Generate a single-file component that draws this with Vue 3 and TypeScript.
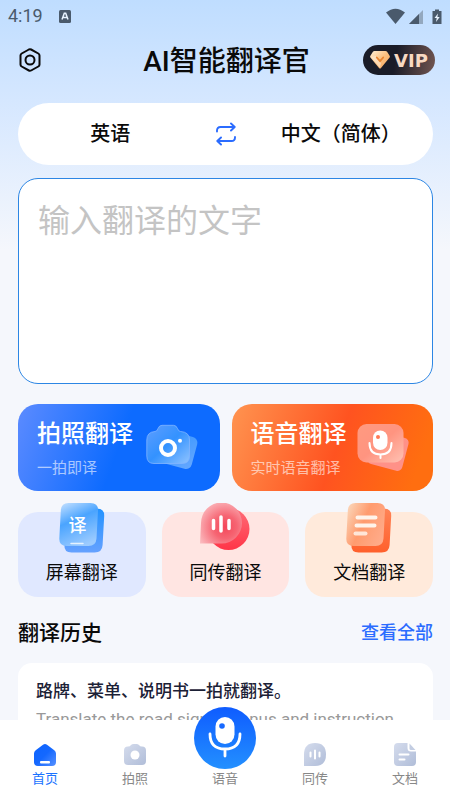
<script setup lang="ts">
import { ref } from 'vue'

type TabId = 'home' | 'photo' | 'voice' | 'live' | 'doc'

interface Tab {
  id: TabId
  label: string
}

const tabs: Tab[] = [
  { id: 'home', label: '首页' },
  { id: 'photo', label: '拍照' },
  { id: 'voice', label: '语音' },
  { id: 'live', label: '同传' },
  { id: 'doc', label: '文档' },
]

const active = ref<TabId>('home')
const source = ref<string>('英语')
const target = ref<string>('中文（简体）')
const draft = ref<string>('')

function swapLanguages(): void {
  const previous = source.value
  source.value = target.value
  target.value = previous
}
</script>

<template>
  <div class="app">
    <div class="status">
      <span class="clock">4:19</span>
      <svg class="status-app" width="12" height="13" viewBox="0 0 12 13">
        <rect width="12" height="13" rx="1.5" fill="#4a5a6c" />
        <path d="M3 9.5 5.3 3.2h1.4L9 9.5M4 7.4h4" fill="none" stroke="#e8f3ff" stroke-width="1.5" />
      </svg>
      <svg class="status-icons" width="56" height="17" viewBox="0 0 56 17">
        <path d="M0 4.6Q9.500-3.200 19 4.600L9.500 16z" fill="#4a5a6c" />
        <path d="M23 16 37 2v14z" fill="#93a8bf" />
        <path d="M23 16 33 6v10z" fill="#4a5a6c" />
        <path d="M49 1.500h4V3h2.500v13h-9V3H49z" fill="#4a5a6c" />
        <path d="M52 5.500 48.500 10h2.200l-.7 4 3.700-5h-2.300z" fill="#e8f3ff" />
      </svg>
    </div>

    <header class="header">
      <button class="icon-button" type="button" aria-label="设置">
        <svg width="24" height="24" viewBox="0 0 24 24" fill="none" stroke="#0a0a0a" stroke-width="2">
          <path d="M10.900 1.500q1.100-.6 2.200 0l7.200 4q1.200.7 1.200 2v9q0 1.300-1.200 2l-7.200 4q-1.100.6-2.200 0l-7.200-4q-1.200-.7-1.200-2v-9q0-1.300 1.200-2z" />
          <circle cx="12" cy="12" r="4.500" />
        </svg>
      </button>
      <h1 class="title">AI智能翻译官</h1>
      <button class="vip" type="button">
        <svg width="20" height="18" viewBox="0 0 20 18">
          <defs>
            <linearGradient id="gem" x1="0" y1="0" x2="1" y2="1">
              <stop offset="0" stop-color="#fff0d8" />
              <stop offset=".5" stop-color="#fbc07f" />
              <stop offset="1" stop-color="#f6a45c" />
            </linearGradient>
          </defs>
          <path d="M4.500 0h11q1 0 1.600.8l2.500 4q.7 1-.2 2L11 17q-1 1-2 0L.6 6.800q-.9-1-.2-2l2.500-4Q3.500 0 4.500 0z" fill="url(#gem)" />
          <path d="m1 6 9 11 1-5-5-7z" fill="#fff1de" opacity=".55" />
          <path d="m6.800 6.500 3.200 3.700 3.200-3.700" fill="none" stroke="#e98532" stroke-width="1.800" stroke-linecap="round" stroke-linejoin="round" />
        </svg>
        <span>VIP</span>
      </button>
    </header>

    <main class="content">
      <div class="languages">
        <button type="button" class="language">{{ source }}</button>
        <button type="button" class="swap" aria-label="交换语言" @click="swapLanguages">
          <svg width="20" height="24" viewBox="0 0 20 24" fill="none" stroke="#2b6cff" stroke-width="1.900" stroke-linecap="round" stroke-linejoin="round">
            <path d="M1 9.500V8.500q0-3.500 3.500-3.500H18.500M15 1.500 18.700 5 15 8.500" />
            <path d="M19 15v.500q0 3.500-3.500 3.500H1.500M5 15.500 1.300 19 5 22.500" />
          </svg>
        </button>
        <button type="button" class="language">{{ target }}</button>
      </div>

      <textarea v-model="draft" class="editor" aria-label="输入翻译的文字" placeholder="输入翻译的文字"></textarea>

      <section class="features">
        <button type="button" class="feature photo">
          <span class="feature-text">
            <strong>拍照翻译</strong>
            <small>一拍即译</small>
          </span>
          <svg width="53" height="48" viewBox="0 0 53 48">
            <defs>
              <linearGradient id="camBack" x1="0" y1="0" x2="1" y2="1">
                <stop offset="0" stop-color="#2f92ff" />
                <stop offset="1" stop-color="#66a8ff" />
              </linearGradient>
              <linearGradient id="camFront" x1="0" y1="0" x2="1" y2="1">
                <stop offset="0" stop-color="#5f9eff" />
                <stop offset=".5" stop-color="#3392ff" />
                <stop offset="1" stop-color="#8fc3ff" />
              </linearGradient>
            </defs>
            <rect x="12" y="9" width="37" height="33" rx="6" transform="rotate(15 30 26)" fill="url(#camBack)" />
            <path d="M9 7.500q2 0 3-3Q13.300 1.300 16 1.300h11.500q2.700 0 4 3.200 1 3 3 3 9 .5 9 8.500v16q0 7.500-7.500 7.500H8Q.8 39.500.8 32V16q0-8 8.200-8.500z" fill="url(#camFront)" stroke="#83b5ff" stroke-width=".8" />
            <circle cx="22" cy="24" r="7" fill="none" stroke="#fff" stroke-width="4" />
            <circle cx="34" cy="16.700" r="2" fill="#fff" />
          </svg>
        </button>
        <button type="button" class="feature speech">
          <span class="feature-text">
            <strong>语音翻译</strong>
            <small>实时语音翻译</small>
          </span>
          <svg width="55" height="50" viewBox="0 0 55 50">
            <defs>
              <linearGradient id="micFront" x1="0" y1="0" x2="1" y2="1">
                <stop offset="0" stop-color="#ff9a80" />
                <stop offset=".5" stop-color="#ff9480" />
                <stop offset="1" stop-color="#ffc2b4" />
              </linearGradient>
            </defs>
            <rect x="13" y="11" width="36" height="34" rx="5" transform="rotate(15 31 28)" fill="#ff9188" />
            <rect x=".5" y="1" width="46" height="38.500" rx="9" fill="url(#micFront)" />
            <rect x="16" y="7.500" width="14.500" height="19.500" rx="7.250" fill="#fff" />
            <circle cx="21" cy="14" r="2" fill="#ff7955" />
            <path d="M12.500 20q0 11.500 11 11.500T34.500 20M23.500 32v3" fill="none" stroke="#fff" stroke-width="2" stroke-linecap="round" />
          </svg>
        </button>
      </section>

      <section class="tools">
        <button type="button" class="tool screen">
          <svg width="46" height="50" viewBox="0 0 46 50">
            <defs>
              <linearGradient id="scrBack" x1="0" y1="0" x2="0" y2="1">
                <stop offset="0" stop-color="#2292ff" />
                <stop offset="1" stop-color="#65a1ff" />
              </linearGradient>
              <linearGradient id="scrFront" x1=".2" y1="0" x2=".6" y2="1">
                <stop offset="0" stop-color="#b5d9ff" />
                <stop offset=".4" stop-color="#4aa4ff" />
                <stop offset="1" stop-color="#9ccbff" />
              </linearGradient>
            </defs>
            <path d="M14 5.500H38Q45.600 5.500 45.200 13L43.600 42Q43.200 49.500 35.600 49.500H12.500Q5 49.500 5.400 42L6.800 13Q7.200 5.500 14 5.500z" fill="url(#scrBack)" />
            <path d="M9.500 0H31.500Q39.400 0 39 7.500L37.500 35.500Q37 43 29.500 43H7.500Q0 43 .3 35.500L1.800 7.500Q2.200 0 9.500 0z" fill="url(#scrFront)" />
            <text x="9.500" y="28.500" fill="#fff" font-size="18" font-weight="500">译</text>
            <path d="M12 40.500h12" stroke="#e5f2ff" stroke-width="1.500" stroke-linecap="round" />
          </svg>
          <span>屏幕翻译</span>
        </button>
        <button type="button" class="tool live">
          <svg width="50" height="50" viewBox="0 0 50 50">
            <defs>
              <linearGradient id="liveBack" x1="0" y1="0" x2="0" y2="1">
                <stop offset="0" stop-color="#ff6d77" />
                <stop offset="1" stop-color="#ff3548" />
              </linearGradient>
              <radialGradient id="liveFront" cx=".6" cy=".6" r=".7">
                <stop offset="0" stop-color="#f4485a" />
                <stop offset=".4" stop-color="#f66573" />
                <stop offset="1" stop-color="#fbbcc0" />
              </radialGradient>
            </defs>
            <circle cx="28.500" cy="26" r="21" fill="url(#liveBack)" />
            <path d="M0 40.500 1 20A20.500 20.500 0 1 1 21.500 40.500z" fill="url(#liveFront)" />
            <path d="M13.500 17.500v8M21 14v14M29 17.500v8" stroke="#fff" stroke-width="3.500" stroke-linecap="round" />
          </svg>
          <span>同传翻译</span>
        </button>
        <button type="button" class="tool doc">
          <svg width="46" height="50" viewBox="0 0 46 50">
            <defs>
              <linearGradient id="docBack" x1="0" y1="0" x2="0" y2="1">
                <stop offset="0" stop-color="#ff8457" />
                <stop offset="1" stop-color="#ff602c" />
              </linearGradient>
              <linearGradient id="docFront" x1="0" y1=".2" x2="1" y2=".7">
                <stop offset="0" stop-color="#fbd3b5" />
                <stop offset=".45" stop-color="#ff9b6e" />
                <stop offset="1" stop-color="#ffab8a" />
              </linearGradient>
            </defs>
            <path d="M14 5.500H38Q45.600 5.500 45.200 13L43.600 42Q43.200 49.500 35.600 49.500H12.500Q5 49.500 5.400 42L6.800 13Q7.200 5.500 14 5.500z" fill="url(#docBack)" />
            <path d="M9.500 0H31.500Q39.400 0 39 7.500L37.500 35.500Q37 43 29.500 43H7.500Q0 43 .3 35.500L1.800 7.500Q2.200 0 9.500 0z" fill="url(#docFront)" />
            <g stroke="#fff3ea" stroke-width="4" stroke-linecap="round">
              <path d="M11.500 14.500h18M10.500 22.500h18" />
              <path d="M9.500 30.500h10" opacity=".85" />
            </g>
          </svg>
          <span>文档翻译</span>
        </button>
      </section>

      <section class="history">
        <div class="history-head">
          <h2>翻译历史</h2>
          <a href="#history">查看全部</a>
        </div>
        <article class="record">
          <p class="original">路牌、菜单、说明书一拍就翻译。</p>
          <p class="translated">Translate the road signs, menus and instruction</p>
        </article>
      </section>
    </main>

    <nav class="tabs">
      <button
        v-for="tab in tabs"
        :key="tab.id"
        type="button"
        class="tab"
        :class="{ active: active === tab.id }"
        @click="active = tab.id"
      >
        <svg v-if="tab.id === 'home'" width="22" height="23" viewBox="0 0 22 23">
          <defs>
            <linearGradient id="homeFill" x1="0" y1="0" x2="1" y2="1">
              <stop offset="0" stop-color="#0d63ff" />
              <stop offset=".5" stop-color="#1468ff" />
              <stop offset="1" stop-color="#5791ff" />
            </linearGradient>
          </defs>
          <path d="M9 1.800q2-1.600 4 0l7.300 5.500Q22 8.600 22 10.500V19q0 4-4 4H4q-4 0-4-4v-8.500q0-1.900 1.700-3.200z" fill="url(#homeFill)" />
          <rect x="6" y="18" width="10" height="2.500" rx="1" fill="#fff" />
        </svg>
        <svg v-else-if="tab.id === 'photo'" width="22" height="23" viewBox="0 0 22 23">
          <defs>
            <linearGradient id="muted" x1="0" y1="0" x2="1" y2="1">
              <stop offset="0" stop-color="#d5dced" />
              <stop offset="1" stop-color="#b0bdd8" />
            </linearGradient>
          </defs>
          <path d="M4 3.500q2 0 3-1.500 1-1 2.500-1h3Q14 1 15 2q1 1.500 3 1.500 4 0 4 4V18q0 4-4 4H4q-4 0-4-4V7.500q0-4 4-4z" fill="url(#muted)" />
          <circle cx="11" cy="12" r="4.500" fill="#fff" />
        </svg>
        <span v-else-if="tab.id === 'voice'" class="mic">
          <svg width="40" height="44" viewBox="0 0 40 44">
            <rect x="10.500" y="1" width="19" height="27" rx="9.500" fill="#fff" />
            <circle cx="17" cy="10" r="2.800" fill="#1769ff" />
            <path d="M5 18q0 15 15 15t15-15M20 33v7" fill="none" stroke="#fff" stroke-width="2.800" stroke-linecap="round" />
          </svg>
        </span>
        <svg v-else-if="tab.id === 'live'" width="22" height="23" viewBox="0 0 22 23">
          <path d="M0 23V11.500Q0 0 11 0t11 11.500T11 23z" fill="url(#muted)" />
          <path d="M6.500 9.500v4M11 7.500v8M15.500 9.500v4" stroke="#fff" stroke-width="2" stroke-linecap="round" />
        </svg>
        <svg v-else width="22" height="23" viewBox="0 0 22 23">
          <path d="M4 0h9.500v5q0 3.500 3.500 3.500h5V19q0 4-4 4H4q-4 0-4-4V4q0-4 4-4z" fill="url(#muted)" />
          <path d="M15.500.5 21.500 7H17q-1.500 0-1.500-1.500z" fill="#c3cde2" />
          <path d="M5.500 11.500h9M5.500 16.500h5" stroke="#fff" stroke-width="2" stroke-linecap="round" />
        </svg>
        <span>{{ tab.label }}</span>
      </button>
    </nav>
  </div>
</template>

<style>
body {
  background: #f5f7fc;
}
</style>

<style scoped>
.app {
  display: flex;
  flex-direction: column;
  height: 100vh;
  overflow: hidden;
  background: linear-gradient(#bfddff 0, #d5e7ff 100px, #f5f7fc 250px);
  font-family: Roboto, 'Noto Sans CJK SC', sans-serif;
  color: #0a0a0a;
}

button {
  margin: 0;
  padding: 0;
  border: 0;
  background: none;
  font: inherit;
  color: inherit;
  cursor: pointer;
}

svg {
  display: block;
  flex: none;
}

.status {
  display: flex;
  align-items: center;
  height: 32px;
  padding: 0 8px;
  color: #4a5a6c;
}

.clock {
  font-size: 18px;
  line-height: 32px;
}

.status-app {
  margin-left: 16px;
}

.status-icons {
  margin-left: auto;
}

.header {
  display: grid;
  grid-template-columns: 72px 1fr 72px;
  align-items: center;
  height: 56px;
  padding: 0 15px 0 18px;
}

.icon-button {
  justify-self: start;
}

.title {
  margin: 0;
  padding-top: 4px;
  font-size: 28px;
  font-weight: 500;
  line-height: 40px;
  text-align: center;
}

.vip {
  display: flex;
  align-items: center;
  justify-content: center;
  gap: 4px;
  height: 30px;
  border-radius: 15px;
  background: linear-gradient(100deg, #1a1c28 45%, #735651);
  color: #f8d9c2;
  font-family: 'DejaVu Sans', sans-serif;
  font-size: 18px;
  font-weight: 700;
}

.content {
  flex: 1;
  min-height: 0;
  overflow: hidden;
  padding: 15px 17px 0 18px;
}

.languages {
  display: grid;
  grid-template-columns: 1fr 46px 1fr;
  align-items: center;
  height: 62px;
  border-radius: 31px;
  background: #fff;
}

.language {
  font-size: 20px;
  font-weight: 500;
  line-height: 32px;
}

.swap {
  display: grid;
  place-items: center;
}

.editor {
  display: block;
  box-sizing: border-box;
  width: 100%;
  height: 206px;
  margin-top: 13px;
  padding: 16px 19px;
  border: 1px solid #2c86e4;
  border-radius: 20px;
  outline: 0;
  resize: none;
  background: #fff;
  color: #0a0a0a;
  font-family: inherit;
  font-size: 32px;
  line-height: 52px;
}

.editor::placeholder {
  color: #c4c4c4;
}

.features {
  display: grid;
  grid-template-columns: 1fr 1fr;
  gap: 12px;
  margin-top: 20px;
}

.feature {
  display: flex;
  align-items: center;
  justify-content: space-between;
  height: 87px;
  padding: 0 21px 0 19px;
  border-radius: 20px;
  color: #fff;
  text-align: left;
}

.photo {
  background: linear-gradient(110deg, #5c8bff, #0d6bff 50%);
}

.speech {
  background: linear-gradient(110deg, #ff9450, #ff5320 52%, #ff6e10 90%);
}

.feature-text strong,
.feature-text small {
  display: block;
  white-space: nowrap;
}

.feature-text strong {
  font-size: 24px;
  font-weight: 500;
  line-height: 36px;
}

.feature-text small {
  margin-top: 4px;
  font-size: 15px;
  line-height: 24px;
  opacity: 0.6;
}

.tools {
  display: grid;
  grid-template-columns: repeat(3, 1fr);
  gap: 16px;
  margin-top: 21px;
}

.tool {
  display: flex;
  flex-direction: column;
  align-items: center;
  gap: 6px;
  height: 85px;
  border-radius: 20px;
  font-size: 18px;
  line-height: 28px;
}

.tool svg {
  margin-top: -9px;
}

.tool.screen {
  background: #e0e8ff;
}

.tool.live {
  background: #ffe5e2;
}

.tool.doc {
  background: #ffeadb;
}

.history {
  margin-top: 18px;
}

.history-head {
  display: flex;
  align-items: center;
  justify-content: space-between;
  height: 32px;
}

.history-head h2 {
  margin: 0;
  font-size: 21px;
  font-weight: 500;
}

.history-head a {
  color: #2b6cff;
  font-size: 18px;
  font-weight: 500;
  text-decoration: none;
}

.record {
  margin-top: 16px;
  padding: 14px 18px;
  border-radius: 14px;
  background: #fff;
}

.record p {
  margin: 0;
  font-size: 17px;
  line-height: 28px;
  white-space: nowrap;
}

.original {
  color: #1c2136;
  font-weight: 500;
}

.translated {
  color: #999;
}

.tabs {
  display: grid;
  grid-template-columns: repeat(5, 1fr);
  height: 80px;
  background: #fff;
}

.tab {
  display: flex;
  flex-direction: column;
  align-items: center;
  justify-content: flex-end;
  gap: 3px;
  padding-bottom: 11px;
  color: #888;
  font-size: 13px;
  line-height: 20px;
}

.tab.active {
  color: #1a73ff;
}

.mic {
  display: grid;
  place-items: center;
  flex: none;
  width: 62px;
  height: 62px;
  margin-top: -13px;
  margin-bottom: -3px;
  border-radius: 50%;
  background: linear-gradient(#0f5cff, #2390ff);
}
</style>
